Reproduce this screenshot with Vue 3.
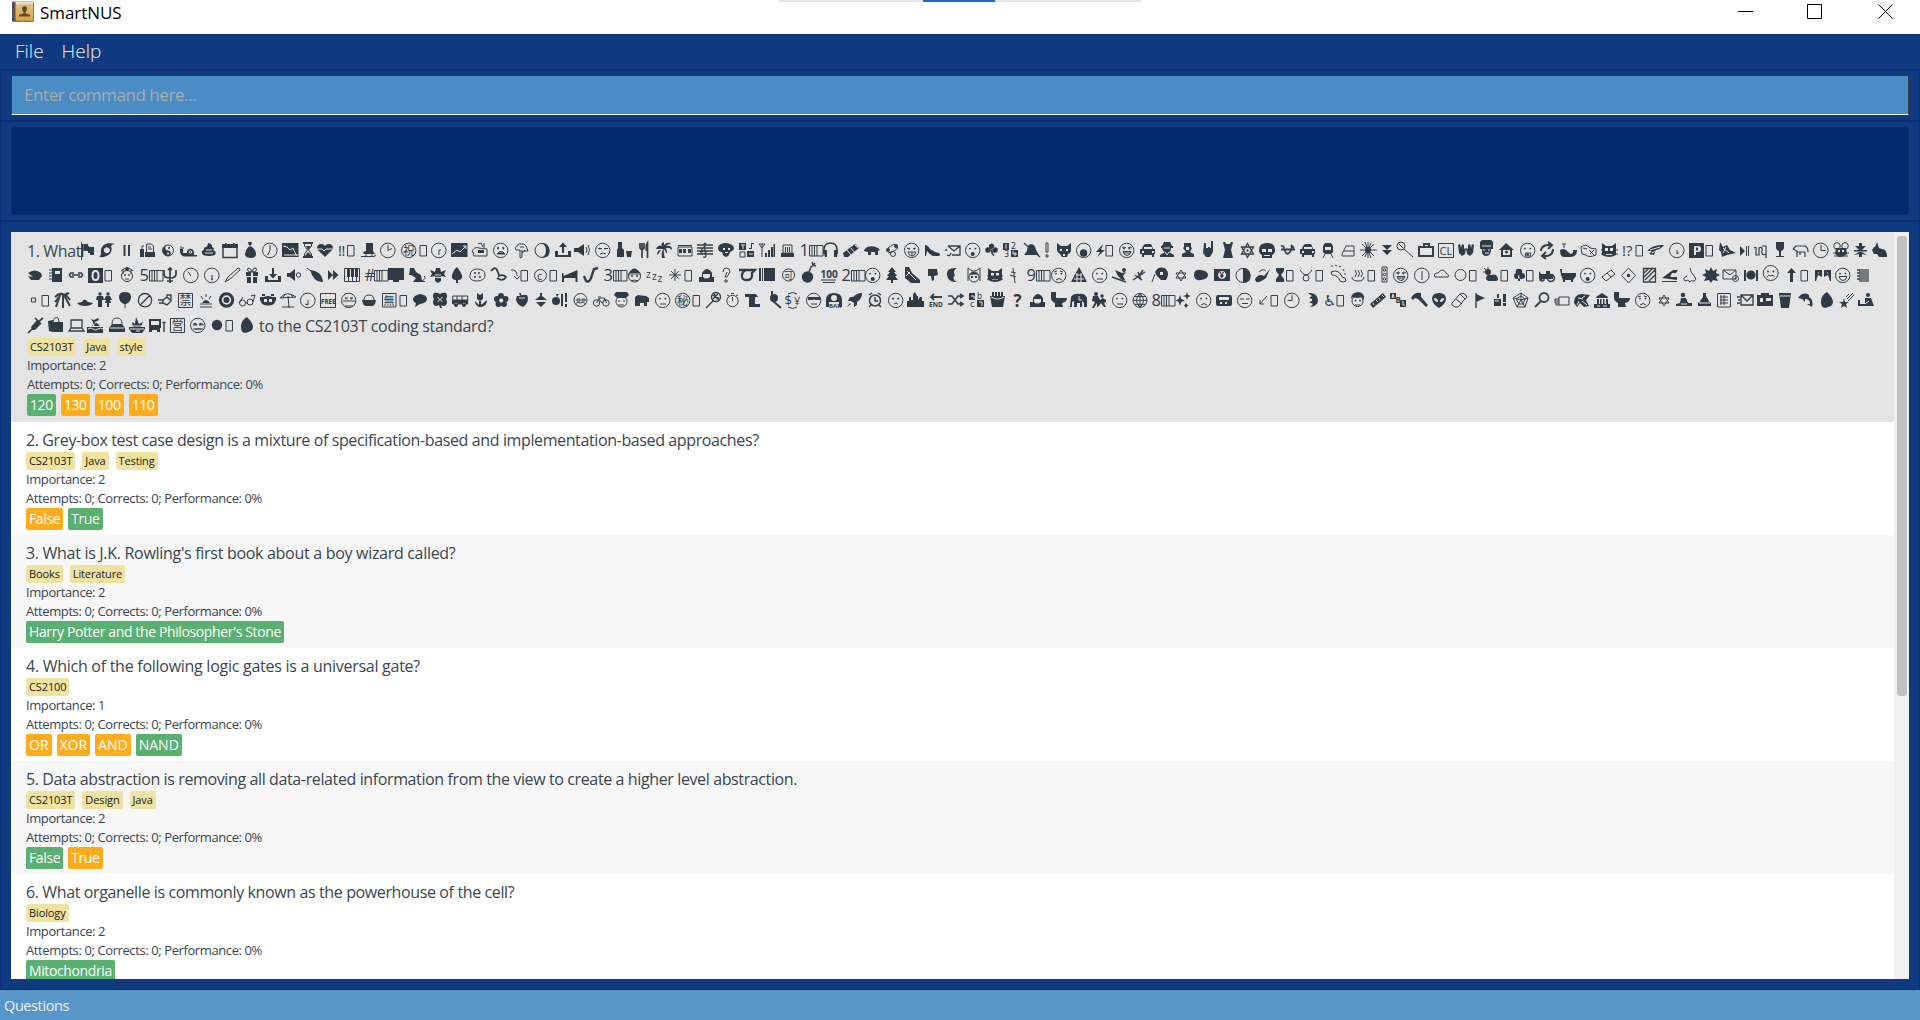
<script setup>
const circle = (cx, cy, r) => `M${cx - r} ${cy}a${r} ${r} 0 1 0 ${2 * r} 0a${r} ${r} 0 1 0 ${-2 * r} 0z`
const rect = (x, y, w, h) => `M${x} ${y}h${w}v${h}h${-w}z`
const ring = circle(7.7, 8.4, 7.2)
const dots = circle(5, 6.6, 0.9) + circle(10.4, 6.6, 0.9)
const face = (mouth, fill = '', eyes = dots) => ({ f: eyes + fill, s: ring + mouth })
const clock = (hands) => ({ s: circle(7.8, 8.4, 7.3) + hands })
const sym = (c, size = 17, x = 0, y = 14) => ({ t: [[x, y, size, c]] })
const box = (x) => `M${x} 3.5h6.5v10.5h-6.5z`
const keycap = (c) => ({ t: [[-0.5, 14, 16.5, c, 'ui']], s: 'M9.5 3.5h13.5v10.5h-13.5zM12 3.5v10.5M14.5 3.5v10.5M17 3.5v10.5' })
const star = 'M7.5 1.5l6 10.5h-12zM7.5 15.5l6-10.5h-12z'

const glyphs = {
  flag: { f: 'M0 2h1.3v13h-1.3zM1 2h5v2h1v1h5v8h-4v-2h-2v-2h-5z' },
  cyclone: { f: 'M0 15q2-1 2-4c-1-9 7-11 14-9q-3 0-4 2c3 8-5 12-12 11zM7.8 5.2a3 3 0 1 0 .1 0z' },
  pause: { s: 'M1.5 3v11M6 3v11', w: 2 },
  fax: { f: 'M0 7h4v8h-4zM5 10h10v5h-10z', s: 'M2 7v-3h2M6.5 10v-8h5l2 2v6M8 5h3M8 7h4' },
  yin: { s: circle(6, 8.5, 5.5), f: 'M6 3a5.500 5.500 0 0 0 0 11a2.700 2.700 0 0 0 0-5.500a2.700 2.700 0 0 1 0-5.500zM6 10.500a1 1 0 1 0 .1 0z' + circle(7, 6, 1) },
  snail: { f: 'M0 7h3v4h4c-1-5 7-6 7 0v2h3v1.5h-13q-3-1-4-4z', s: 'M1 7v-3M3 7v-2', l: circle(10.500, 10, 1.300) },
  poo: { f: 'M6 1q5 1 4 4q3 1 1 3q4 1 2 5q-6 2-12 0q-3-4 1-5q-1-3 2-3q2-1 2-4z', l: 'M4 8h6M3 11h8' },
  calendar: { f: 'M0 2h16v4h-16z', s: 'M1 3h14v12.5h-14zM4 1v3M12 1v3', w: 1.500 },
  bag: { f: 'M3 0h4l-1 4q5 4 5 8t-5 4q-6 0-6-4q1-5 4-8z', l: 'M3 4h5' },
  c7: clock('M8 3v5.5l-2.5 4.5'), c2: clock('M8 3v5.5l4-2'), c3: clock('M8 3v5.5h4.5'), c6: clock('M8 13v-5h2'),
  c5: clock('M8 4v0M8 8v4l2-1.5'), c11: clock('M8 9l-3-4.5'), c61: clock('M8 8v5.5M7 12h2'), c1: clock('M8 8v5l-3-1'), c9: clock('M8 3v5.5h-4.5'), c12: clock('M8 4v9'),
  down: { f: rect(0, 1, 16.5, 14), l: 'M1 4l4 1l3 3l3-2l3 7h2M2 13h13' },
  up: { f: rect(0, 1, 16.5, 14), l: 'M1 12l5-4l3 2l6-6M12 4h3v3' },
  hour: { f: 'M0 0h10v2h-10zM0 14h10v2h-10zM3 4h5l-3 4zM2 14l3-4l4 4z', s: 'M1.5 1v3l3 4l-3 4v3M8.500 1v3l-3 4l3 4v3' },
  heart: { f: 'M8 15L0 7q0-5 4-5q3 0 4 2q1-2 4-2q4 0 4 5z', l: 'M0 7h5l2 2l2-2h7' },
  bang2: { t: [[0, 13.5, 15, '‼', 'ui']], s: box(9.5) },
  skate: { f: 'M5 1h7v8l2 3h-11l-1-2l3-1z', s: 'M0 14.500h13q2 0 1-2M5 12v2M11 12v2' },
  kiwai: { s: ring + box(19), t: [[2, 13, 11.5, '祝', 'cjk']] },
  mouse: { s: 'M0 10q2-6 7-4l8 1v7h-12q-3 0-1-3zM6 2l3-1l2 4M12 1v5', f: 'M6 8h6v3h-6z' },
  tired: face('M4 6l2-1M11 6l-2-1M4 12q4-5 8 0z', rect(5, 10.5, 6, 1.5)),
  point: { s: 'M1 8q-2-3 3-6h5q3 2 4 7l-3 0l-1-1M9 8v2h-2v-2M7 9v6q-2 2-2 0v-7h-4M5 5h4' },
  moonr: { f: 'M8 1q7 0 7.500 7.500t-7.500 7q4-2 4-7t-4-7.500z', s: circle(8, 8.4, 7) },
  outbox: { f: 'M0 9h3v4h10v-4h3v6h-16zM7 11v-6h-3l4-4.500l4 4.500h-3v6z' },
  inbox: { f: 'M0 9h3v4h10v-4h3v6h-16zM7 1v6h-3l4 4.500l4-4.500h-3v-6z' },
  speaker: { f: 'M0 6h4l6-4v12l-6-4h-4z', s: 'M12 5q2 3 0 6M14 3q3 5 0 10' },
  unamused: face('M3 6.500h4M9 6.500h4M5 12q3-2 6 0'),
  sake: { f: 'M1 0h4v6l2 2v7h-7v-7l1-2zM9 9h6l-1 6h-4z' },
  fork: { s: 'M1 1v5q2 3 4 0v-5M3 1v15M8.500 16v-15q-2 3-1 8', w: 1.7 },
  palm: { f: 'M0 7q2-5 6-3q-2-3 2-4q0 2 0 3q4-4 7-1q-4 0-5 2q6-1 6 4q-3-3-6-2q1 2 1 5l-1 0q-1-3-2-4q-1 3 1 9h-3q-1-5 1-9q-5 0-7 0zM4 8q-3 1-3 5q2-1 4-5z' },
  tram: { s: 'M1 5h14v9h-14zM1 3.500h14', f: 'M2 7h3v4h-3zM6 7h3v4h-3zM11 7h3v4h-3z' },
  score: { s: 'M0 3h16M0 6h16M0 9h16M0 12h16M6 15q3 1 3-2l-2-11q2-2 2 1q-6 5-5 8q4 2 5-1q-2-3-4 0', w: 1.3 },
  dog: { f: 'M3 2q5-2 9 0q4 1 4 5q-2 3-4 3q-1 5-4 5t-4-5q-3 0-4-3q0-4 3-5zM5 6v2h2v-2zM10 6v2h2v-2zM7 11h3v-1h-3z' },
  symbols: { f: rect(0, 1, 7, 7) + rect(8, 9, 7, 6) + 'M10 6h2v-5h3v1h-2v5h-3z', s: 'M1 10h5v5h-5z', l: 'M2 3h4M4 3v4M10 12h4' },
  signal: { f: 'M6 11h2v4h-2zM9 8h2v7h-2zM12 5h2v10h-2zM14.500 2h1.500v13h-1.500z', s: 'M0 2h6l-3 4zM3 2v13' },
  siren: { s: 'M2 3h9v8h-9z', f: 'M0 11h13v4h-13zM4 5h1v5h-1zM6 5h1v5h-1zM8 5h1v5h-1z' },
  k1: keycap('1'), k5: keycap('5'), kh: keycap('#'), k3: keycap('3'), k2: keycap('2'), k9: keycap('9'), k8: keycap('8'),
  headphones: { s: 'M1 12v-4q0-7 6.500-7t6.500 7v4', f: 'M0 8h4v7h-2zM11 8h4l-1 7h-3z', w: 1.6 },
  battery: { f: 'M0 11l12-9l4 4l-11 9h-4z', l: 'M4 8l4 5M8 6l3 4M12 3l3 3' },
  pig: { f: 'M0 8l3-3q6-2 11 1l2 2l-2 1v4h-3v-3h-4v3h-3v-3l-4-1z' },
  bouquet: { f: circle(3, 8, 2) + circle(11, 4, 2), s: 'M3 6l6-4l4 4l-4 3l-6 2' + circle(8, 12, 2.500) },
  grin: face('M3 6l3 1M12 6l-3 1M4 10h8q-1 4-4 4t-4-4M8 10v3'),
  heel: { f: 'M0 3q3 0 5 4q4 3 9 4q2 2 0 3h-6q-4-2-6-5l-1 5h-1z' },
  mailin: { s: 'M3 4h12v9h-8M3 4l6 5l6-5M2 8h-2M2 13q3 2 4-2', w: 1.300 },
  open: face('', circle(7.7, 12, 2)), wow: face('M5.500 11h5v3h-5z', circle(7.7, 12.500, 1.3)),
  shamrock: { f: circle(3, 8, 2.800) + 'M4 3q3-3 5 0q1 2-2 5q-4-3-3-5z' + circle(10, 8, 2.800) + 'M6 8h1.500q0 4 2 5l-1 1q-3-2-2.500-6z', fr: 'nonzero' },
  n1234: { f: rect(0, 1, 6, 7) + rect(8, 8, 7, 7), t: [[8, 7, 8, '2'], [1, 15, 8, '3']], l: 'M3 2v5M10 9v3h4M12 10v4' },
  nobell: { f: 'M7 2q4 0 5 6l3 5h-15l3-4q0-6 4-7z', s: 'M0 1l16 14', w: 1.3 },
  bang: { s: 'M1 1h2v9h-2zM1 13h2v2h-2z' },
  wolf: { f: 'M0 1l4 3h6l4-3v7q0 3-3 4l-1 3h-5l-2-3q-3-2-3-4zM3 7v2h2v-2zM9 7v2h2v-2zM6 12v2h2v-2z' },
  gasp: { s: ring, f: circle(7.6, 11, 3.7) },
  zap: { f: 'M7 2l-7 8h4l-3 5l8-7h-4z', s: box(10) },
  smile: face('M3 6l2-1l2 1M9 6l2-1l2 1M4 9.500h8q-1 4-4 4t-4-4M5 11h6'),
  taxi: { f: 'M5 2h6l1 2l1 3h2v5h-1v3h-2v-2h-8v2h-2v-3h-2v-5h2l1-3zM4 5v2h8v-2zM2 9v2h2v-2zM12 9v2h2v-2z' },
  spy: { f: 'M4 0h6l2 4h1v2h-2q0 4-2 4l5 3v2h-14v-2l5-3q-2 0-3-4h-1v-2h1z', l: 'M4 6h6M5 10l2 3l2-3' },
  worker: { f: 'M2 1h7v4l1 1l-2 4l4 2v3h-12v-3l4-2l-3-4l1-1zM4 5v3h3v-3z' },
  rock: { f: 'M1 1h2v5h2v-1h2v1h1v-7h2v11l-3 5h-4l-3-4z' },
  dress: { f: 'M0 0h2l1 2h4l1-2h2l-2 8l2 8h-10l2-8z' },
  magen: { s: star, f: circle(7.5, 8.5, 1.2), w: 1.300 },
  magen2: { s: 'M6 3l5 8h-10zM6 14l5-8h-10z' },
  skull: { f: 'M8 1q8 0 8 7q0 4-3 5v3h-10v-3q-3-1-3-5q0-7 8-7zM3 7v3h4v-3zM9 7v3h4v-3zM5 13v1h6v-1z' },
  taurus: { s: 'M0 4q3-1 4 5q2 5 5 1q3-5 1-7M0 7.500h14M10 3l3 3', w: 1.8 },
  train: { f: 'M2 1h6l2 3v6l-2 2h-6l-2-2v-6zM2 5v3h6v-3z', s: 'M2 12l-2 4M8 12l2 4' },
  cake: { s: 'M0 12l4-8h8v10h-12zM2 9h10' },
  burst: { s: 'M8 0v16M0 8h17M2 2l12 12M14 2l-12 12M5 0l6 16M11 1l-6 14', f: circle(8, 8, 3) },
  down2: { f: 'M0 3h10l-5 5zM0 8h10l-5 5z' },
  ladle: { s: circle(4, 4, 4) + 'M7 7l9 8M2 2l4 4' },
  case: { s: 'M1 5h14v9h-14zM6 5v-3h5v3', w: 2 },
  cl: { s: 'M.5 1.500h15v14h-15z', t: [[1.500, 13, 11, 'CL', 'ui']] },
  gloves: { f: 'M0 3l2-1l1 4l1-4l2 1v4l2-1l-1 6l-3 2l-3-3zM16 3l-2-1l-1 4l-1-4l-2 1v4l-2-1l1 6l3 2l3-3z' },
  guard: { f: 'M2-2h9l2 2v7h-2q0 7-5 7t-4-7h-2v-7z', l: 'M3 8h2M8 8h2M5 11h4M2 4h9' },
  house: { f: 'M0 8l7-7l8 7h-2v7h-11v-7zM4 8v5h7v-5z' + circle(7.500, 10, 1.500), fr: 'evenodd' },
  repeat: { s: 'M2 9q0-5 6-6h4M14 7q0 6-6 7h-4M9 0l4 3l-4 4M7 10l-4 4l4 3', w: 2 },
  whale: { f: 'M0 8q5-3 8 2l3 2q3-1 2-4h4q0 7-7 7h-6q-4 0-4-7z', s: 'M4 6v-4M2 2h4' },
  fish: { s: 'M1 5q5-4 9 1l6 1v6q-7 3-10 0l-4-1zM3 6l4 1M9 8l5 5M10 12l4-4' },
  cat: { f: 'M1 1l4 3h6l4-3v12q-7 4-14 0zM4 6v3h3v-3zM9 6v3h3v-3zM5 12v1h6v-1z', s: 'M0 8h3M0 12h3M13 8h4M13 12h4' },
  cato: { f: 'M1 1l4 3h6l4-3v12q-7 4-14 0zM4 6v3h3v-3zM9 6v3h3v-3zM5 12v1h6v-1z', s: 'M0 9h16M0 12h16' },
  bangq: { t: [[0, 14, 15, '!?', 'ui']], s: box(14) },
  leaf: { f: 'M0 9q6-7 17-6q-4 5-8 5l-2 5l-5-1l3-3z', l: 'M3 8l10-3M5 11l4-2' },
  park: { f: 'M0 1h15v15h-15zM5 4v9h2v-3h2q3 0 3-3t-3-3zM7 5.500h2v3h-2z', s: box(17) },
  ribbon: { f: 'M1 0l3 5l4-2l3 5l6 3l-9 2l-5 2l-1-5l-2-2z', l: 'M4 6l6 5M7 5l-3 6' },
  next: { f: 'M0 4l5 5l-5 5z', s: 'M6.500 4v10M8.500 4v10' },
  capri: { s: 'M0 6q3-2 2 3v4h3v-7q4-2 3 3t4 3v-8h-4M12 12v4', w: 1.2 },
  wine: { f: 'M0 0h8v5q0 3-3 4v5h3v1h-8v-1h3v-5q-3-1-3-4z' },
  sheep: { s: 'M0 7l3-3h9q3 1 3 6M0 7l4 2v6M4 10h8M12 10v5M7 10v3', w: 1.200 },
  mousef: { s: circle(4, 4, 3.3) + circle(12, 4, 3.3) + 'M0 11h16M1 14h14', f: 'M3 6h10l1 6l-5 3h-3l-4-3zM5 8v2h2v-2zM9 8v2h2v-2z' },
  lift: { f: 'M5 1h3v3h4l-4 4h-3l-4-4h4zM0 8h13v1.500h-13zM5 10h3l5 3l-5-1v3h-3v-3l-5 1z' },
  rabbit: { f: 'M5 0l2 6l3 1q5 0 5 8h-8l-2-3h-3l-2-4l2-3h1z' },

  pouch: { f: 'M0 6q7-5 13 0l1 3l-3 4h-8l-3-4l5 1z' },
  book: { f: 'M3 1h10v14h-10zM6 4v3h5v-3z', s: 'M0 3h4M0 6h4M0 9h4M0 12h4' },
  link: { s: 'M6 6h-3q-3 2 0 4h3M10 6h3q3 2 0 4h-3M4 8h8', w: 1.6 },
  o: { f: 'M0 1h15v15h-15zM7.500 3q-4 0-4 5.500t4 5.500t4-5.500t-4-5.500zM7.500 5q2 0 2 3.500t-2 3.500t-2-3.500t2-3.500z', s: box(17) },
  granny: { s: circle(7, 9, 5.500) + 'M1 4q6-6 12 0M3 2v5M11 2v5M5 12h4', f: circle(5, 8, 0.9) + circle(9, 8, 0.9) + circle(7, 2, 2) },
  trident: { s: 'M7 1v15M1 3v4q0 4 6 4t6-4v-4M4 14h6M5 3l2-2l2 2', w: 1.7 },
  pen: { s: 'M0 15l3-5l10-9q2 0 2 2l-10 9z' },
  gift: { f: 'M0 5h5v4h-5zM7 5h5v4h-5zM1 10h4v6h-4zM7 10h4v6h-4z', s: 'M6 5q-6 0-4-4q3 0 4 4q1-5 4-4q2 4-4 4' },
  mute: { f: 'M0 6h3l5-4v12l-5-4h-3z', s: circle(11.500, 8, 2.2) },
  pepper: { f: 'M3 3q12 1 13 12q-9 1-13-12z', s: 'M0 1l4 3M6 5l7 8' },
  ff: { f: 'M0 3l5 5l-5 5zM5 3l5.500 5l-5.500 5z' },
  piano: { f: 'M3 1h3v9h-3zM7 1h3v9h-3zM11 1h3v9h-3z', s: 'M.5 1.500h15v13h-15zM4.500 10v4M8.500 10v4M12.500 10v4' },
  screen: { f: 'M0 1h16v12h-5v2h-6v-2h-5z' },
  monkey: { f: 'M1 1l4 0l2 4l5 3l1 6h3v1h-12l3-4l-5-3l-2 0z', s: 'M13 14q5-3 2-5' },
  bee: { f: 'M6 1h4l1 4l5-2l-2 4l2 3l-5-1v5l-3 2l-3-2v-5l-5 1l2-3l-2-4l5 2z', l: 'M5 8h6M5 10.500h6' },
  tree: { f: 'M5 0q2 2 5 8q1 5-4 5v3h-2v-3q-5 0-4-5q2-6 5-8z' },
  cookie: { s: 'M7 2q8 0 8 6t-8 6t-7-6t7-6', f: circle(5, 6, 1) + circle(9, 6, 1) + circle(5, 10, 1) + circle(10, 10, 1) },
  snake: { s: 'M1 4q4-5 6-1t2 6q4-2 7 1q-3 5-9 1', w: 1.8 },
  curve: { s: 'M0 3q6-1 6 6M3 9l3 3l3-3' + box(10) },
  copy: { s: circle(6.500, 8.500, 6) + box(16), t: [[3, 12.500, 11, 'c', 'ui']] },
  bed: { f: 'M0 6h1.500v3l14-6v12h-2v-4h-11.500v4h-2z' },
  sax: { s: 'M15 1l-4 1l-3 9q-2 5-5 3l-2-5', w: 2.4 },
  boy: { s: circle(7.500, 9, 6) + 'M1 7h13M4 14q3-2 7 0', f: 'M2 6q5-9 11 0z' + circle(5, 9, 1) + circle(10, 9, 1) },
  zzz: { t: [[0, 11, 10, 'z', 'ui'], [6, 13, 10, 'z', 'ui'], [11.500, 15, 10, 'z', 'ui']] },
  spark: { s: 'M6 2v12M0 8h12M2 4l8 8M10 4l-8 8' + box(16) },
  bow: { f: 'M0 15v-5h3v-4q5-8 10 0v4h2v5zM4 7v3q3 3 7 0v-3z', s: 'M5 6h6' },
  qo: { s: 'M1 5q0-4 3.500-4t3.500 4l-3 5h-2l2-5M3 13h2v2h-2z' },
  q: { t: [[-0.500, 15, 17, '?', 'uib']] },
  loop: { s: 'M0 3h16l-3 3q1 7-5 7t-5-5q0-3 4-5', w: 2.3 },
  album: { f: 'M0 1h16v13h-16z', l: 'M2.500 1v13M4.500 1v13' },
  ring2: { s: circle(6.500, 8, 6), t: [[2, 12, 9, '可', 'cjk']] },
  bomb: { f: circle(6.500, 10, 5.700), s: 'M8 5l2-5l3-2M11-5l1 3l2-2M12-2l3 1', w: 1.500 },
  hundred: { t: [[-0.500, 11, 10, '100', 'uib']], s: 'M0 13h15M2 15.500h12' },
  pine: { f: 'M6 0l4 5h-2l3 4h-2l3 4h-5v3h-2v-3h-5l3-4h-2l3-4h-2z' },
  slide: { f: 'M0 0h4l3 6l8 7v3h-9l-6-5z', l: 'M2 4l9 9M1 9l4-4' },
  thumbdn: { f: 'M0 2h9l1 6l-4 1v4l-2 1l-1-5h-3z' },
  crescent: { f: 'M8 1q-9 0-8 7t8 7h2q-6-3-2-7q-3-4 2-7z' },
  girl: { s: circle(7, 10, 5) + 'M1 1l4 3h4l4-3v13M1 1v13M4 7l6 0', f: 'M2 8q4-6 10 0l-4-1zM4 9h2v2h-2zM8 9h2v2h-2z' },
  dagger: { s: 'M3 1l2 15M1 5l5 1M0 8l6 2' },
  worried: face('M5 13q3-3 6 0M3 5l3-1M12 5l-3-1'),
  balls: { f: 'M8 0l8 15h-16z', l: 'M5 8h6M3 12h10M6 6v9M10 6v9' },
  snowboard: { f: circle(12, 3, 2) + 'M3 3l7 3l4-1l-3 4l2 4l-3 0l-4-4z', s: 'M0 10l14 5', w: 1.8 },
  bug: { s: 'M0 13l12-8M2 8l7 5M5 5l3 8M10 3l-4 6', w: 1.5 },
  ram: { f: 'M3 5q4-7 11-3q4 5 0 11h-5l-4-4zM8 5v3h3v-3z', s: 'M3 7l-3 8' },
  oval: { f: 'M7 3q7 1 7 5t-7 5t-7-5t7-5' },
  camera: { f: 'M0 2h16v12h-16zM8 4a4 4 0 1 0 .1 0z', t: [[5.500, 11, 8, '¥', 'uib']] },
  half: { f: 'M8 1q7 0 7.500 7.500t-7.500 7.500z', s: circle(8, 8.4, 7) },
  fly: { f: 'M0 12q4-6 9-3l6-7l-4 9q-6 5-10 4z', s: 'M4 5q4-4 7-1' },
  hour2: { f: 'M0 1h8v3l-3 4l3 4v3h-8v-3l3-4l-3-4z', s: box(10.500) },
  medal: { s: 'M0 3q3 5 6 5t6-5' + circle(6, 11, 3) + box(16) },
  foot: { s: 'M1 5q7-3 10 3q1 3 4 3l1 3q-3 2-6 0q-2-6-8-6zM1-1l2 0M5-2l2 1M9-1l2 1M13 2l1 2M15 6v2' },
  steam: { s: 'M0 10q0 4 6 4t6-4M3 10q3-3 0-7M6 10q3-3 0-7M9 10q3-3 0-7' + box(16) },
  lights: { s: 'M0 0h5v15h-5z' + circle(2.500, 3, 1.200) + circle(2.500, 7.500, 1.200) + circle(2.500, 12, 1.200) },
  cloud: { s: 'M1 10q-2-4 3-4q5-6 8 0q4 2 2 4z' },
  dot0: { s: circle(5.500, 8, 5.500) + box(14.500) },
  suncloud: { f: circle(5, 5, 3) + 'M3 12q0-5 5-4q6-2 7 4q0 2-3 2h-7z', fr: 'nonzero', s: 'M0 5h2M5 0v2M1 1l2 2' + box(18) },
  club: { f: circle(5, 5, 3.300) + circle(3, 9, 3) + circle(8, 9, 3) + 'M4 8h2v6h-2z', fr: 'nonzero', s: box(12.500) },
  tractor: { f: 'M0 4l2 3h5v-3h4v3h3v5h-10l-3 2l-1-4z', s: circle(12, 11, 3.500) + circle(3, 12, 2), w: 1.5 },
  bath: { f: 'M0 2h2v4h14v3l-3 4v2h-2v-2h-6v2h-2v-2l-2-5z' },
  ticket: { s: 'M0 10l9-7l4 4l-9 7zM5 6l4 4' },
  diamond: { s: 'M7.500 1l7 7.500l-7 7.500l-7-7.500z', f: circle(7.500, 8.500, 1.700) },
  hatch: { s: 'M.5 1.500h12v13.500h-12zM1 6l5-5M1 10l9-9M2 13l10-10M6 14l6-6', w: 1.300 },
  shoe: { f: 'M0 11l11-8h5l-2 3h-4l-2 4h7v3z', s: 'M0 14.500h15' },
  nose: { s: 'M6 1q0 4 5 9q2 3-1 4q-3-1-4 1q-2-3-5-1q-3-3 2-5' },
  boom: { f: 'M8 0l2 4l4-2l-1 4l4 2l-4 2l2 4l-5-1l-2 3l-2-3l-5 1l2-4l-4-2l4-2l-1-4l4 2z' },
  mailat: { s: 'M0 3h13v9h-13zM0 3l7 5l6-5' + circle(12.500, 11.500, 3), f: circle(12.500, 11.500, 1) },
  plate: { f: circle(7, 8, 4.600), s: 'M1 3v11M13 3v11', w: 2 },
  grimace: { s: circle(7.700, 6, 7.500) + 'M4 10q1-3 3.500-1q3-2 4 1', f: circle(5, 4.500, 1) + circle(10.500, 4.500, 1) },
  arrowup: { f: 'M4.500 1l4.500 5h-3v9h-3v-9h-3z', s: box(14) },
  flags: { f: 'M0 3h7v7l-4-2l-2 6h-1zM9 3h7v5l0 6h-1l-2-6l-4 2z', l: 'M3 6h1M12 6h1' },
  happy: face('M4 9.500h8q-1 4-4 4t-4-4'),
  comb: { s: 'M3 2v13M5 2v13M7 2v13M9 2v13M11 2v13M0 3h3M0 6h3M0 9h3M0 12h3', w: 1.300 },

  small: { s: 'M.5 6h4v4h-4z' + box(11) },
  tanabata: { s: 'M0 5q5-5 9-2l5-2M5 3l-4 12M8 3v13M9 3l6 11M4 5l-4 5M11 3l4 5', w: 2 },
  hat: { f: 'M0 11l5-1q2-5 6 0l5 1q-2 3-8 3t-8-3' },
  couple: { f: circle(4, 2, 1.700) + circle(12, 2, 1.700) + 'M1 4h6l1 4h-2v7h-4v-7h-2zM10 4h4l2 4l-2 0l1 3h-2v4h-2v-4h-2l1-3h-2z' },
  balloon: { f: 'M6 0q6 0 6 5t-5 7h-2q-5-2-5-7t6-5', s: 'M6 12v4' },
  no: { s: circle(7, 8.200, 6.700) + 'M2.500 12.700l9-9', w: 1.300 },
  fish2: { s: 'M0 8h5l4-3l4 4l-4 4l-4-2h-4M9 5v-2h4v5M5 8v4', w: 1.400 },
  kin: { s: 'M.5 1.500h14v14h-14z', t: [[1.500, 13, 12, '禁', 'cjk']] },
  sunrise: { s: 'M0 12h12M0 15h12M6 2v3M1 4l2 3M11 4l-2 3', f: 'M2 11q4-6 8 0z' },
  target: { f: circle(7.500, 8, 7.700) + circle(7.500, 8, 4.700) + circle(7.500, 8, 3) },
  glasses: { s: circle(3.500, 11, 3) + circle(11, 10, 3) + 'M0 11l4-6M14 10l2-7l-4 1M6.500 11h2' },
  panda: { f: 'M0 5h4q4-2 8 0h4v3l-2 4q-6 3-12 0l-2-4zM4 7v3h3v-3zM9 7v3h3v-3z', s: 'M2 3h3M11 3h3', w: 2 },
  umbrella: { s: 'M0 6q7-8 16-1zM8 4l1 12M2 15h12M5 2l-2 4M11 2l2 4' },
  free: { s: 'M.5 1.500h15v14h-15z', t: [[1, 11.500, 6.300, 'FREE', 'uib']] },
  mask: face('M2 9h12M4 14h8M4 6l3 0M9 6h3'),
  rice: { f: 'M0 8h14q-1 6-4 6h-6q-3 0-4-6z', s: 'M2 8q0-5 5-5t5 5' },
  mu: { s: 'M.5 1.500h13.500v13.500h-13.500z' + box(18), t: [[1.500, 12.500, 11, '無', 'cjk']] },
  bubble: { f: 'M7 2q7 1 7 5t-7 5l-5 3l1-4q-3-1-3-4t7-5' },
  clover: { f: 'M1 1q3-1 6 1q3-2 6-1q2 3 0 6q2 3 0 6q-2 2-5 0l1 3h-2l-1-3q-3 2-5 0q-2-3 0-6q-2-3 0-6z', l: 'M4.500 5l5 5M9.500 5l-5 5' },
  bus: { s: 'M.7 4h15v8h-15zM1 8h14M5 4v4M10 4v4', f: circle(4, 13, 2) + circle(12, 13, 2) + 'M0 8h16v4h-16z' },
  tulip: { f: 'M2 1l3 2l3-2v6q-3 3-6 0zM4 8h2v5l6-5q0 6-6 7h-2q-4-2-4-6l4 4z' },
  flower: { f: circle(7, 4, 3) + circle(3, 7, 3) + circle(11.500, 7, 3) + circle(4.500, 12, 3) + circle(10, 12, 3), fr: 'nonzero', l: circle(7.200, 8.500, 1.600) },
  berry: { f: 'M3 1h2v2h6l1 3q0 6-5 9q-7-3-7-8l1-3h3z', l: 'M3 6h6' },
  nut: { f: 'M5 1h2v3l5 4h-12l5-4zM1 10h10l-5 5z' },
  apple: { f: circle(4, 9, 4) + 'M4 2h3l-2 3zM9 2h2v12h-2zM13 1h2v9h-2zM13 12h2v3h-2z' },
  grandpa: { s: circle(7.500, 8, 6.500) + 'M3 13q0-4 4-2q5-2 5 2M4 7h3v2h-3zM9 7h3v2h-3z' },
  bike: { s: circle(3.500, 11, 3.200) + circle(13, 11, 3.200) + 'M3.500 11l3-5h5l2 5M6 7l3 4l3-4M5 5h3' },
  cop: { f: 'M2 0h11l2 3l-3 3h-9l-3-3z', s: circle(7.500, 9.500, 5.500) + 'M4 13h6M4 9h2M9 9h2' },
  bear: { f: 'M0 5l3-2l8 1l3 2l0 4h-2v4h-3v-3h-4v3h-5z' },
  confused: face('M5 12h6'), sad: face('M5 13q3-3 6 0'), flat: face('M5 11.500h6M3 7h4M9 7h4', '', ''), down3: face('M4 6l2 1M11 6l-2 1M6 12l2-1l2 1'),
  secret: { s: ring + box(18), t: [[2, 13, 11.500, '秘', 'cjk']] },
  racket: { s: circle(11, 5, 4.500) + 'M8 9l-7 7M8 3l6 5M8 7l5-5M9 2l5 5', w: 1.400 },
  stopw: { s: circle(6.500, 9, 5.700) + 'M6.500 5v4M5 1.500h3M1 3l2 1M12 3l-2 1' },
  scroll: { f: 'M0 2h11l2 3h-3v7h5v3h-11v-10h-4z' },
  phone: { f: circle(6, 6, 4), s: 'M4-1v4M5 9l8 7', w: 2 },
  exchange: { t: [[-0.500, 13, 13, '$', 'ui'], [9, 13, 11, '¥', 'ui']], s: 'M3 2q5-3 9 0M3 15q5 3 9 0' },
  cool: { s: ring + 'M5 12h6', f: 'M2 5h12v3h-5l-1-1l-1 1h-5z' },
  store: { f: 'M0 8q0-7 8-7t8 7v7h-3v-5h-10v5h-3zM5 6a3 3 0 0 0 6 0a3 3 0 0 0-6 0z', t: [[3, 15.500, 6, 'BAR', 'uib']] },
  rocket: { f: 'M15 1q0 6-5 9v3l-3 2v-4l-3-2h-3l2-4h3q4-4 9-4zM0 15l3-4l1 1z' },
  alarm: { s: circle(7, 8.500, 5.500) + 'M7 5v4h3M1 3l3-2M13 3l-3-2M3 13l-2 2M11 13l2 2', w: 1.500 },
  castle: { f: 'M0 15v-6h2v-4h2v3h2v-6l2-2l2 4h1v4l2-3h2v4h2v6z' },
  end: { t: [[0, 15, 6.500, 'END', 'uib']], s: 'M2 5h11M5 2l-3 3l3 3', w: 1.800 },
  shuffle: { s: 'M0 4h4l6 8h5M0 12h4l6-8h5M12 2l3 2l-3 2M12 10l3 2l-3 2', w: 1.600 },
  abc: { f: rect(0, 1, 6, 7) + rect(8, 8, 7, 7), t: [[8, 7, 8, 'b'], [1, 15, 8, 'c']], l: 'M2 4h3v3M10 10h3v4' },
  fries: { f: 'M0 4h15l-2 11h-11zM2 0h2v4h-2zM5 0h2v4h-2zM8 0h2v4h-2zM11 0h2v4h-2z', l: 'M1 5q7 4 13 0' },
  toilet: { f: 'M0 0h5v6h11q0 4-5 5l1 4h-8v-4q-4-2-4-5z' },
  elephant: { f: 'M0 5q3-4 8-3q6-1 8 4v9h-3v-4l-2-2v6h-2v-4h-3v4h-3v-6l-2 1v5h-2z', l: 'M8 4v4h3' },
  runners: { f: circle(5, 2, 2) + circle(11, 4, 1.700) + 'M2 4h5l2 4l3-2l3 2v2l-2 1l2 4h-2l-3-4l-3 4h-1v-4l-3 5h-2l3-6l-3-1z' },
  globe: { s: circle(7, 8.400, 7) + 'M0 8.400h14M1 4.500h12M1 12.300h12M7 1.400v14M7 1.400q-7 7 0 14M7 1.400q7 7 0 14' },
  sparkles: { f: 'M4 3l1.300 4l3.700 1.500l-3.700 1.500l-1.300 4l-1.300-4l-3-1.500l3-1.500zM11 0l1 3l3 1l-3 1l-1 3l-1-3l-3-1l3-1zM10 11l1 1.500l1.500 1l-1.500 1l-1 1.500l-1-1.500l-1-1l1-1z' },
  pager: { f: 'M1 3h14l1 2v7l-1 2h-14l-1-2v-7zM3 5v3h10v-3zM4 10v2h2v-2zM9 10v2h2v-2z' },
  arrowdl: { s: 'M8 4l-7 8M1 8v4h4' + box(12) },
  moonl: { f: 'M0 1q9-1 10 7q0 6-8 7l3-3l-4-2l3-1v-2l-3-1l3-2z' },
  wheel: { t: [[-1, 14, 15, '♿\uFE0E']], s: box(13) },
  prince: { s: circle(7.500, 9, 5.500) + 'M5 13h5', f: 'M1 7q0-7 8-7q6 1 5 8l-2-3q-6 2-9 0z' + circle(5.500, 8.500, 0.900) + circle(10, 8.500, 0.900) },
  ruler: { f: 'M0 12l13-11l3 4l-13 11z', l: 'M3 11l1 2M6 8l2 2M9 6l1 2M12 3l2 2' },
  abcd: { f: rect(0, 1, 6, 6) + rect(10, 8, 6, 7), t: [[5.500, 11, 8, 'B', 'uib']], l: 'M2 6l1-4l1 4M13 9v4h2' },
  hammer: { f: 'M0 6q3-6 10-5v4l7 8l-2 2l-8-8l-3-1l-2 2z' },
  alien: { f: 'M7 1q7 0 7 6q-1 6-7 9q-6-3-7-9q0-6 7-6zM2 6q0 4 4 4q0-4-4-4zM12 6q-4 0-4 4q4 0 4-4z' },
  pill: { s: 'M1 11l8-9q3-2 6 1q1 2 0 3l-8 9q-3 1-6-2zM5 7l6 5M9 2l5 5' },
  pennant: { s: 'M1 1v15', f: 'M1 2l9 4l-9 4z', w: 1.400 },
  lock: { f: 'M0 7h7v7h-7zM9 2h3v8h-3zM9 11h3v3h-3zM3 2h2v4h-2z', l: 'M1 9l4 0' },
  web: { s: 'M8 1l7 5l-3 9h-8l-4-9zM8 4l4 3l-2 5h-4l-3-5zM8 1v7l7-2M8 8l4 7M8 8l-4 7M8 8l-7-2' },
  mag: { s: circle(10, 5.500, 4.500) + 'M7 9l-6 6', w: 1.800 },
  tag: { s: 'M5 5h10v8h-10zM5 7h-4v2h4M1 9v2h4M2 11v2h3' },
  dragon: { f: 'M0 11q0-9 8-9l8 1l-4 5l3 6l-5 1l-4-4l-3 4z', l: 'M4 6l5 1M5 9l-2 4M8 9l5 4M11 4l-3 2' },
  museum: { f: 'M2 5l6-4l6 4v1h-12zM3 7h2v5h-2zM6 7h1.500v5h-1.500zM9 7h1.500v5h-1.500zM12 7h2v5h-2zM0 12h16v4h-16z', l: 'M3 14h3M9 14h4' },
  meditate: { f: circle(7, 3, 2.300) + 'M5 6h5l2 5h4v3h-16v-2l4-1z', l: 'M5 12h6' },
  bell: { f: 'M5 1h3v3l3 5h-9l3-4zM0 11l3-2h7l3 2v3h-13z', l: 'M1 11h11' },
  chart: { s: 'M.5 1.500h13v13.500h-13zM3 5h8M3 8h8M3 11h8M7 3v10M4 3v10' },
  mailfast: { s: 'M4 3h12v10h-12zM4 3l6 6l6-6M0 5h3M1 8h2M0 11h3', w: 1.400 },
  radio: { f: 'M0 3h4v-2h8v2h4v11h-16zM3 6v4h3v-4zM9 6v3h5v-3z' },
  cup: { f: 'M0 1h12l-2 15h-8z', l: 'M1 4h10' },
  dolphin: { f: 'M0 6q5-7 11-3l0 2q5 3 3 10l-5-3h3q0-5-5-5l0 3l-3-3z' },
  drop: { f: 'M6 0q6 6 6 10t-6 5.500t-6-5.500t6-10' },
  shooting: { f: 'M5 6l1 4h4l-3 2l1 4l-3-2l-3 2l1-4l-3-2h4z', s: 'M8 7l6-6M9 9l6-6M7 5l3-3' },
  sit: { f: circle(10, 3, 2) + 'M7 6h6l3 8h-16v-6h2v4l5 0z', l: 'M7 12l4-3' },

  syringe: { f: 'M3 10l6-7l4 4l-6 6h-3z', s: 'M0 16l4-4M10 5l5-4M7 1l6 6', w: 1.700 },
  bags: { f: 'M0 4l5-1v12l-4-1zM5 5h10v10h-10z', s: 'M5 5q1-6 5-4l1 4' },
  laptop: { s: 'M3 3h11v8h-11zM3 11l-2 3h15l-2-3', w: 1.3 },
  island: { f: 'M0 10h16v6h-16zM5 9q1-3 5-3l3 3zM4 2l3 1l4-2l1 2l-4 2l-1 4h-1l0-4z', l: 'M1 12q3-2 5 0t5 0t5 0' },
  purse: { f: 'M3 7h10l3 4v4h-16v-4z', s: 'M3 7q0-6 5-6t5 6', l: 'M1 11h14' },
  fountain: { f: 'M3 5l3 2l1-7l3 7l4-2l-2 5h4v2l-3 4h-10l-3-4v-2h4z', l: 'M1 12h14M4 9h9M7 14h4' },
  busstop: { f: 'M0 2h12v9h-1v4h-3v-2h-5v2h-3zM2 4v4h8v-4z', s: 'M15 5v10M13.500 5.500h3', w: 1.4 },
  ei: { s: 'M.5 1.500h14v14h-14z', t: [[1.500, 13, 12, '営', 'cjk']] },
  neutral: face('M3 7h4v1h-4M9 7h4v1h-4M5 12h6M4 11v2M6 11v2M8 11v2M10 11v2M12 11v2'),
  disc: { f: circle(5, 8, 5.200), s: box(14) },
}

const emojiRows = [
  { lead: '1. What', cursor: true, start: 27, items: 'flag 82 cyclone 99 pause 123 fax 140 yin 162 snail 180 poo 202 calendar 222 bag 245 c7 262 down 282 hour 303 heart 317 bang2 338 skate 361 c2 380 kiwai 401 c6 431 up 451 mouse 472 tired 493 point 515 moonr 534 outbox 555 speaker 574 unamused 595 sake 617 fork 639 palm 656 tram 677 score 697 dog 718 symbols 739 signal 759 siren 781 k1 800 headphones 823 battery 843 pig 864 bouquet 885 grin 904 heel 925 mailin 945 open 965 shamrock 985 n1234 1003 nobell 1024 bang 1045 wolf 1057 gasp 1076 zap 1096 smile 1119 taxi 1140 spy 1160 worker 1182 rock 1203 dress 1223 magen 1240 skull 1259 taurus 1281 taxi 1300 train 1323 cake 1342 burst 1360 down2 1382 ladle 1397 case 1418 cl 1438 gloves 1458 guard 1480 house 1499 wow 1520 repeat 1539 whale 1560 fish 1580 cat 1601 bangq 1622 leaf 1647 c5 1669 park 1689 ribbon 1719 next 1740 capri 1754 wine 1776 sheep 1793 c3 1813 mousef 1833 lift 1854 rabbit 1872' },
  { start: 27, items: 'pouch 28 book 49 link 68 o 88 granny 120 k5 140 trident 163 c11 183 c61 204 pen 225 gift 246 inbox 265 mute 287 pepper 307 ff 328 piano 344 kh 365 screen 388 monkey 409 bee 430 tree 452 cookie 470 snake 490 curve 511 copy 534 bed 562 sax 583 k3 604 boy 627 zzz 646 spark 669 bow 699 qo 722 loop 739 album 759 ring2 782 bomb 801 hundred 821 k2 842 open 865 pine 886 slide 905 thumbdn 928 crescent 947 girl 967 cato 987 dagger 1010 k9 1027 worried 1051 balls 1071 confused 1092 snowboard 1112 bug 1133 ram 1152 magen2 1175 oval 1194 camera 1214 half 1235 fly 1255 hour2 1276 medal 1300 foot 1330 steam 1352 lights 1382 smile 1393 c12 1414 cloud 1434 dot0 1455 suncloud 1483 club 1514 tractor 1539 bath 1560 open 1580 ticket 1602 diamond 1621 hatch 1643 shoe 1662 nose 1684 boom 1703 mailat 1723 plate 1744 grimace 1763 arrowup 1787 flags 1815 happy 1835 comb 1857' },
  { start: 27, items: 'small 31 tanabata 55 hat 77 couple 96 balloon 119 no 138 fish2 158 kin 178 sunrise 200 target 219 glasses 239 panda 260 umbrella 280 c1 300 free 320 mask 341 rice 362 mu 382 bubble 413 clover 433 bus 452 tulip 475 flower 494 berry 516 nut 535 apple 552 grandpa 573 bike 593 cop 614 bear 635 confused 655 secret 675 racket 705 stopw 726 scroll 745 phone 768 exchange 785 cool 806 store 826 rocket 847 alarm 868 down3 888 castle 907 end 929 shuffle 948 abc 969 fries 990 q 1014 bow 1030 toilet 1051 elephant 1071 runners 1091 confused 1112 globe 1133 k8 1152 sparkles 1176 sad 1196 pager 1216 flat 1237 arrowdl 1259 c9 1284 moonl 1308 wheel 1324 prince 1350 ruler 1370 abcd 1390 hammer 1411 alien 1432 pill 1451 pennant 1475 lock 1494 web 1513 mag 1534 tag 1554 dragon 1574 museum 1594 toilet 1614 worried 1635 magen2 1658 meditate 1676 bell 1698 chart 1717 mailfast 1737 radio 1757 cup 1779 dolphin 1798 drop 1821 shooting 1839 sit 1858' },
  { start: 27, items: 'syringe 28 bags 48 laptop 68 island 87 purse 109 fountain 129 busstop 149 ei 170 neutral 190 disc 212 drop 241', tail: 'to the CS2103T coding standard?', tailAt: 259 },
].map((row) => {
  const parts = row.items.split(' ')
  const list = []
  for (let i = 0; i < parts.length; i += 2) list.push({ g: glyphs[parts[i]], x: +parts[i + 1] })
  list.forEach((it, i) => {
    it.w = (list[i + 1] ? list[i + 1].x : row.tailAt || it.x + 16) - it.x
  })
  return { ...row, list, indent: list[0].x - row.start }
})

const questions = [
  { tags: ['CS2103T', 'Java', 'style'], importance: 2, answers: [['120', 1], ['130', 0], ['100', 0], ['110', 0]] },
  { text: '2. Grey-box test case design is a mixture of specification-based and implementation-based approaches?', tags: ['CS2103T', 'Java', 'Testing'], importance: 2, answers: [['False', 0], ['True', 1]] },
  { text: "3. What is J.K. Rowling's first book about a boy wizard called?", tags: ['Books', 'Literature'], importance: 2, answers: [["Harry Potter and the Philosopher's Stone", 1]] },
  { text: '4. Which of the following logic gates is a universal gate?', tags: ['CS2100'], importance: 1, answers: [['OR', 0], ['XOR', 0], ['AND', 0], ['NAND', 1]] },
  { text: '5. Data abstraction is removing all data-related information from the view to create a higher level abstraction.', tags: ['CS2103T', 'Design', 'Java'], importance: 2, answers: [['False', 1], ['True', 0]] },
  { text: '6. What organelle is commonly known as the powerhouse of the cell?', tags: ['Biology'], importance: 2, answers: [['Mitochondria', 1]] },
]
const isCaps = (s) => /^[A-Z]+$/.test(s)
</script>

<template>
  <div class="window">
    <header class="titlebar">
      <svg class="app-icon" width="22" height="21" viewBox="0 0 22 21">
        <defs>
          <linearGradient id="cover" x1="0" y1="0" x2="0" y2="1">
            <stop offset="0" stop-color="#e6c384" /><stop offset="1" stop-color="#dba444" />
          </linearGradient>
        </defs>
        <rect x="0" y="0.500" width="22" height="20.500" rx="1" fill="#9a7b50" />
        <rect x="3" y="2" width="18" height="17.500" fill="url(#cover)" />
        <rect x="2" y="1" width="19" height="1.500" fill="#f3ead6" />
        <rect x="0" y="1" width="3.500" height="19" fill="#5e5250" />
        <path d="M12.500 5q2.500 0 2.500 3q0 2-1.500 3v1.500l4.500 1.200v1.800h-11v-1.800l4.500-1.200v-1.500q-1.500-1-1.500-3q0-3 2.500-3z" fill="#5c4a33" />
      </svg>
      <span class="app-title">SmartNUS</span>
      <div class="progress"><i></i></div>
      <svg class="win-buttons" width="156" height="16" viewBox="0 0 156 16" fill="none" stroke="#000">
        <path d="M0 7.500h15M69.500 .5h14v14h-14z" />
        <path d="M140.500 .5l14 14M154.500 .5l-14 14" />
      </svg>
    </header>
    <nav class="menu"><span>File</span><span>Help</span></nav>
    <section class="pane command-pane"><div class="command">Enter command here...</div></section>
    <section class="pane result-pane"><div class="result"></div></section>
    <section class="pane list-pane">
      <div class="list">
        <div class="cells">
          <article v-for="(q, i) in questions" :key="i" class="cell" :class="{ selected: i === 0, odd: i > 0 && i % 2 === 0 }">
            <h2 v-if="q.text" class="question"><span :class="'q' + (i + 1)">{{ q.text }}</span></h2>
            <template v-else>
              <div v-for="(row, r) in emojiRows" :key="r" class="question emoji-row">
                <span class="lead" :style="{ width: row.indent + 'px' }"><template v-if="row.lead">{{ row.lead }}<i class="caret"></i></template></span>
                <svg v-for="(it, k) in row.list" :key="k" class="glyph" :style="{ width: it.w + 'px' }" height="16">
                  <path v-if="it.g.f" :d="it.g.f" class="solid" :fill-rule="it.g.fr || 'evenodd'" />
                  <path v-if="it.g.s" :d="it.g.s" class="line" :stroke-width="it.g.w || 1" />
                  <path v-if="it.g.l" :d="it.g.l" class="cut" />
                  <text v-for="(t, n) in it.g.t || []" :key="n" :x="t[0]" :y="t[1]" :font-size="t[2]" :class="t[4]">{{ t[3] }}</text>
                </svg>
                <span v-if="row.tail" class="tail">{{ row.tail }}</span>
              </div>
            </template>
            <div class="tags"><span v-for="t in q.tags" :key="t" class="tag">{{ t }}</span></div>
            <p class="meta">Importance: {{ q.importance }}</p>
            <p class="meta">Attempts: 0; Corrects: 0; Performance: 0%</p>
            <div class="answers"><span v-for="a in q.answers" :key="a[0]" class="answer" :class="{ correct: a[1], caps: isCaps(a[0]) }">{{ a[0] }}</span></div>
          </article>
        </div>
        <div class="scrollbar"><div class="thumb"></div></div>
      </div>
    </section>
    <footer class="status">Questions</footer>
  </div>
</template>

<style>
body { margin: 0; overflow: hidden; }
</style>

<style scoped>
.window { width: 1920px; height: 1020px; display: flex; flex-direction: column; background: #0f3a80; font-family: "Open Sans", "Noto Sans", sans-serif; color: #3a4650; box-sizing: border-box; overflow: hidden; }
.window * { box-sizing: border-box; }
.titlebar { position: relative; height: 34px; flex: none; background: #fff; display: flex; align-items: flex-start; }
.app-icon { margin: 1px 0 0 12px; }
.app-title { margin-left: 6px; line-height: 25px; font-size: 17px; color: #000; letter-spacing: -0.05px; }
.progress { position: absolute; left: 779px; top: 0; width: 362px; height: 2px; background: #e5e5e5; display: flex; justify-content: center; }
.progress i { width: 72px; margin-right: 2px; background: #2a62c9; }
.win-buttons { margin: 4px 26px 0 auto; }
.menu { height: 35px; flex: none; display: flex; gap: 18px; padding-left: 15px; line-height: 35px; font-size: 19px; font-weight: 300; color: #edf1f8; }
.pane { flex: none; border: 1px solid #0a3176; }
.command-pane { height: 52px; padding: 5px 10px; }
.command { height: 40px; background: #4a8cc4; border: 1px solid #383838; border-bottom-color: #fff; padding-left: 12px; line-height: 38px; font-size: 17px; letter-spacing: -0.43px; color: #a9abac; }
.result-pane { height: 100px; padding: 5px 10px; }
.result { height: 88px; background: #00286b; border: 1px solid #07306f; border-radius: 3px; }
.list-pane { height: 769px; padding: 10px; }
.list { height: 747px; display: flex; background: #fff; overflow: hidden; }
.cells { flex: 1; overflow: hidden; }
.cell { height: 113px; padding: 5px 0 5px 15px; background: #fff; }
.cell.odd { background: #f7f7f7; }
.cell.selected { height: 190px; border: 1px solid #e4e4e4; background: #e4e4e4; }
.question { margin: 0; height: 25px; line-height: 26px; font-size: 16px; font-weight: 400; white-space: nowrap; display: flex; align-items: center; letter-spacing: -0.38px; }
.q3 { letter-spacing: -0.3px; }
.q4 { letter-spacing: -0.27px; }
.lead, .tail { flex: none; }
.tail { letter-spacing: -0.32px; }
.caret { display: inline-block; width: 1px; height: 18px; vertical-align: -3px; background: #3a4650; }
.glyph { flex: none; overflow: visible; margin-top: -1px; letter-spacing: 0; }
.solid { fill: #2f3b46; }
.line { fill: none; stroke: #343f4a; }
.cut { fill: none; stroke: #e4e4e4; stroke-width: 1; }
.glyph text { font-family: "DejaVu Sans", sans-serif; fill: #2f3b46; }
.glyph .ui { font-family: "Open Sans", sans-serif; }
.glyph .uib { font-family: "Open Sans", sans-serif; font-weight: 700; }
.glyph .cjk { font-family: "Noto Sans CJK JP", sans-serif; }
.tags { display: flex; gap: 7px; height: 18px; }
.tag { height: 18px; padding: 0 3px; line-height: 18px; border-radius: 2px; background: #f0e2a0; color: #1c1c1c; font-size: 11px; letter-spacing: -0.12px; }
.meta { margin: 0; height: 19px; line-height: 19px; font-size: 13px; letter-spacing: -0.4px; }
.answers { display: flex; gap: 5px; }
.answer { height: 22px; padding: 0 3px; line-height: 22px; border-radius: 2px; background: #ffac1c; color: #fff; font-size: 14px; letter-spacing: -0.38px; }
.answer.caps { letter-spacing: 0; }
.answer.correct { background: #5ab070; }
.scrollbar { width: 15px; background: #f0f0f0; padding: 4px 2px 0 3px; }
.thumb { height: 460px; border-radius: 3px; background: #c1c1c1; }
.status { height: 30px; flex: none; background: #5796c9; padding-left: 4px; line-height: 31px; font-size: 14.5px; letter-spacing: -0.4px; color: #eaf2f9; }
</style>
